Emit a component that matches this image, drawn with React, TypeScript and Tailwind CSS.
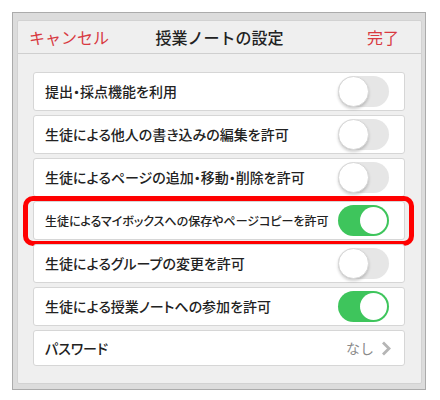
import React from "react";

const font = { fontFamily: '"Noto Sans CJK JP", "Noto Sans", sans-serif' };

function Toggle({ on }: { on: boolean }) {
  return on ? (
    <div className="w-[51px] h-[31px] rounded-full bg-[#3ec55c] relative shrink-0">
      <div className="absolute right-[2px] top-[2px] w-[27px] h-[27px] rounded-full bg-white" />
    </div>
  ) : (
    <div className="w-[51px] h-[31px] rounded-full bg-[#e6e6e6] relative shrink-0">
      <div className="absolute left-0 top-0 w-[31px] h-[31px] rounded-full bg-white border border-[#d8d8d8] shadow-[0_2px_3px_rgba(0,0,0,0.18)]" />
    </div>
  );
}

function Row({
  label,
  on,
  small,
  highlight,
}: {
  label: string;
  on: boolean;
  small?: boolean;
  highlight?: boolean;
}) {
  return (
    <div className="relative h-[39px] bg-white border border-[#d6d6d6] rounded-[3px] flex items-center justify-between pl-[11px] pr-[15px]">
      <span
        className={
          small
            ? "text-[12px] text-[#222] font-medium whitespace-nowrap [font-feature-settings:'palt']"
            : "text-[14px] text-[#222] font-medium whitespace-nowrap [font-feature-settings:'palt']"
        }
      >
        {label}
      </span>
      <Toggle on={on} />
      {highlight && (
        <div className="absolute left-[-11px] right-[-10px] top-[-6px] bottom-[-7px] border-[5px] border-[#ff0000] rounded-[10px] pointer-events-none" />
      )}
    </div>
  );
}

export default function App() {
  return (
    <div className="w-[440px] h-[400px] bg-white pt-[12px] pl-[12px]" style={font}>
      <div className="w-[414px] h-[378px] border border-[#ababab] bg-[#dcdcdc] pl-[4px] pr-[3px] pt-[7px] pb-[5px] flex">
        <div className="flex-1 bg-[#efefef] border border-[#d2d2d2] rounded-[2px] flex flex-col">
          <div className="h-[33px] border-b border-[#cfcfcf] flex items-center justify-between pl-[11px] pr-[22px] relative">
            <span className="text-[16px] text-[#d8393f]">キャンセル</span>
            <span className="absolute left-0 right-0 text-center text-[16px] text-[#222] font-medium pointer-events-none">
              授業ノートの設定
            </span>
            <span className="text-[16px] text-[#d8393f]">完了</span>
          </div>
          <div className="flex flex-col gap-[4px] pl-[15px] pr-[16px] pt-[18px]">
            <Row label="提出・採点機能を利用" on={false} />
            <Row label="生徒による他人の書き込みの編集を許可" on={false} />
            <Row label="生徒によるページの追加・移動・削除を許可" on={false} />
            <Row label="生徒によるマイボックスへの保存やページコピーを許可" on={true} small highlight />
            <Row label="生徒によるグループの変更を許可" on={false} />
            <Row label="生徒による授業ノートへの参加を許可" on={true} />
            <div className="h-[36px] bg-white border border-[#d6d6d6] rounded-[3px] flex items-center justify-between pl-[11px] pr-[13px]">
              <span className="text-[14px] text-[#222] font-medium [font-feature-settings:'palt']">パスワード</span>
              <span className="flex items-center gap-[7px]">
                <span className="text-[14px] text-[#8a8a8a]">なし</span>
                <svg width="10" height="15" viewBox="0 0 10 15">
                  <path d="M2 1.5 L8 7.5 L2 13.5" fill="none" stroke="#b5b5b5" strokeWidth="2.8" />
                </svg>
              </span>
            </div>
          </div>
        </div>
      </div>
    </div>
  );
}
